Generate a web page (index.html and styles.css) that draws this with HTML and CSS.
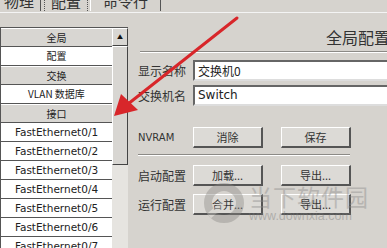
FILE: index.html
```html
<!DOCTYPE html>
<html lang="zh-CN">
<head>
    <meta charset="UTF-8">
    <title>交换机配置</title>
    <link rel="stylesheet" href="styles.css">
</head>
<body>
    <div class="tabs">
        <div class="tab tab-first">物理</div>
        <div class="tab tab-active">配置</div>
        <div class="tab">命令行</div>
    </div>
    <div class="main">
        <div class="sidebar">
            <div class="list">
                <div class="row head">全局</div>
                <div class="row">配置</div>
                <div class="row head">交换</div>
                <div class="row">VLAN 数据库</div>
                <div class="row head">接口</div>
                <div class="row port">FastEthernet0/1</div>
                <div class="row port">FastEthernet0/2</div>
                <div class="row port">FastEthernet0/3</div>
                <div class="row port">FastEthernet0/4</div>
                <div class="row port">FastEthernet0/5</div>
                <div class="row port">FastEthernet0/6</div>
                <div class="row port">FastEthernet0/7</div>
            </div>
            <div class="scrollbar">
                <div class="scroll-btn">&#9650;</div>
                <div class="scroll-thumb"></div>
            </div>
        </div>
        <div class="panel">
            <div class="panel-title">全局配置</div>
            <div class="sep"></div>
            <div class="field">
                <span class="label">显示名称</span>
                <div class="input">交换机0</div>
            </div>
            <div class="field">
                <span class="label">交换机名</span>
                <div class="input">Switch</div>
            </div>
            <div class="btn-row first">
                <span class="label latin">NVRAM</span>
                <div class="btn">消除</div>
                <div class="btn">保存</div>
            </div>
            <div class="sep short"></div>
            <div class="btn-row">
                <span class="label">启动配置</span>
                <div class="btn">加载...</div>
                <div class="btn">导出...</div>
            </div>
            <div class="btn-row">
                <span class="label">运行配置</span>
                <div class="btn">合并...</div>
                <div class="btn">导出...</div>
            </div>
        </div>
    </div>

    <!-- watermark over the buttons -->
    <div class="watermark">
        <svg class="wm-logo" width="42" height="42" viewBox="0 0 42 42">
            <circle cx="21" cy="21" r="16" fill="none" stroke="#8a8884" stroke-width="8"/>
            <path d="M6 34 L21 21" stroke="#d6d3ce" stroke-width="6"/>
        </svg>
        <div class="wm-text">
            <div class="wm-cn">当下软件园</div>
            <div class="wm-url">www.downxia.com</div>
        </div>
    </div>

    <!-- red annotation arrow -->
    <svg class="arrow" width="387" height="248" viewBox="0 0 387 248">
        <line x1="237" y1="18" x2="128" y2="104" stroke="#d8262a" stroke-width="3" stroke-linecap="round"/>
        <polygon points="114,116 121,94 138,110" fill="#d8262a"/>
    </svg>
</body>
</html>
```

FILE: styles.css
```css
body {
    margin: 0;
    background-color: #d6d3ce;
    font-family: "Noto Sans CJK SC", "DejaVu Sans", sans-serif;
    color: #222;
    width: 387px;
    height: 248px;
    overflow: hidden;
    position: relative;
}
.tabs {
    display: flex;
    height: 12px;
    overflow: hidden;
    border-bottom: 1px solid #f4f4f4;
}
.tab {
    margin-top: -8px;
    height: 19px;
    padding: 0 12px;
    font-size: 15px;
    line-height: 17px;
    border-right: 1px solid #555;
    border-left: 1px solid #fff;
    color: #333;
}
.tab-first {
    margin-left: -9px;
    padding-right: 6px;
}
.tab-active {
    margin-left: 3px;
    margin-right: 2px;
    border: 1px dotted #555;
    padding: 0 6px;
}
.main {
    display: flex;
    height: 235px;
    overflow: hidden;
}
.sidebar {
    display: flex;
    width: 131px;
    padding-top: 14px;
    flex-shrink: 0;
}
.list {
    width: 111px;
    border-top: 1px solid #555;
    border-left: 1px solid #555;
}
.row {
    height: 18px;
    border-bottom: 1px solid #555;
    background: #fff;
    font-size: 10px;
    line-height: 18px;
    text-align: center;
    color: #222;
}
.row.head {
    background: #d8d6d2;
    border-top: 1px solid #fff;
    height: 17px;
}
.row.port {
    font-family: "DejaVu Sans", sans-serif;
    font-size: 10.5px;
}
.scrollbar {
    width: 16px;
    height: 221px;
    border-top: 1px solid #555;
    background: #e6e4e0;
}
.scroll-btn {
    height: 16px;
    background: #d8d6d2;
    border: 1px solid #fff;
    border-right-color: #444;
    border-bottom-color: #444;
    font-size: 6px;
    line-height: 16px;
    text-align: center;
    color: #111;
}
.scroll-thumb {
    height: 117px;
    background: #d8d6d2;
    border: 1px solid #fff;
    border-right-color: #444;
    border-bottom-color: #444;
}
.panel {
    flex: 1;
    padding-left: 7px;
    padding-top: 13px;
}
.panel-title {
    text-align: right;
    font-size: 16px;
    line-height: 22px;
    color: #333;
    margin-right: -3px;
}
.sep {
    height: 0;
    border-top: 1px solid #8c8a86;
    border-bottom: 1px solid #fff;
    margin: 3px 0 7px 2px;
}
.sep.short {
    width: 212px;
    margin: 6px 0 9px 0;
}
.field {
    display: flex;
    align-items: center;
    margin-bottom: 4px;
}
.label {
    width: 55px;
    flex-shrink: 0;
    font-size: 12px;
    color: #333;
}
.label.latin {
    font-family: "DejaVu Sans", sans-serif;
    font-size: 10px;
}
.input {
    flex: 1;
    height: 17px;
    background: #fff;
    border: 2px solid #666;
    border-right: none;
    border-bottom-color: #ddd;
    font-size: 12px;
    line-height: 17px;
    padding-left: 3px;
    color: #222;
}
.field:nth-child(4) .input {
    font-family: "DejaVu Sans", sans-serif;
}
.btn-row {
    display: flex;
    align-items: center;
    gap: 18px;
    margin-bottom: 8px;
}
.btn-row.first {
    margin-top: 21px;
    margin-bottom: 5px;
}
.btn-row .label {
    margin-right: -18px;
}
.btn {
    width: 67px;
    height: 18px;
    background: #dcdad6;
    border: 1px solid #fff;
    border-right: 2px solid #555;
    border-bottom: 2px solid #555;
    text-align: center;
    font-size: 11px;
    line-height: 18px;
    color: #333;
}
.watermark {
    position: absolute;
    left: 203px;
    top: 182px;
    display: flex;
    align-items: center;
    opacity: 0.4;
    pointer-events: none;
}
.wm-logo {
    margin-right: 4px;
}
.wm-cn {
    font-size: 23px;
    line-height: 26px;
    color: #888;
    letter-spacing: 1px;
}
.wm-url {
    font-family: "Liberation Sans", sans-serif;
    font-size: 12.5px;
    color: #777;
}
.arrow {
    position: absolute;
    left: 0;
    top: 0;
    pointer-events: none;
}
```
